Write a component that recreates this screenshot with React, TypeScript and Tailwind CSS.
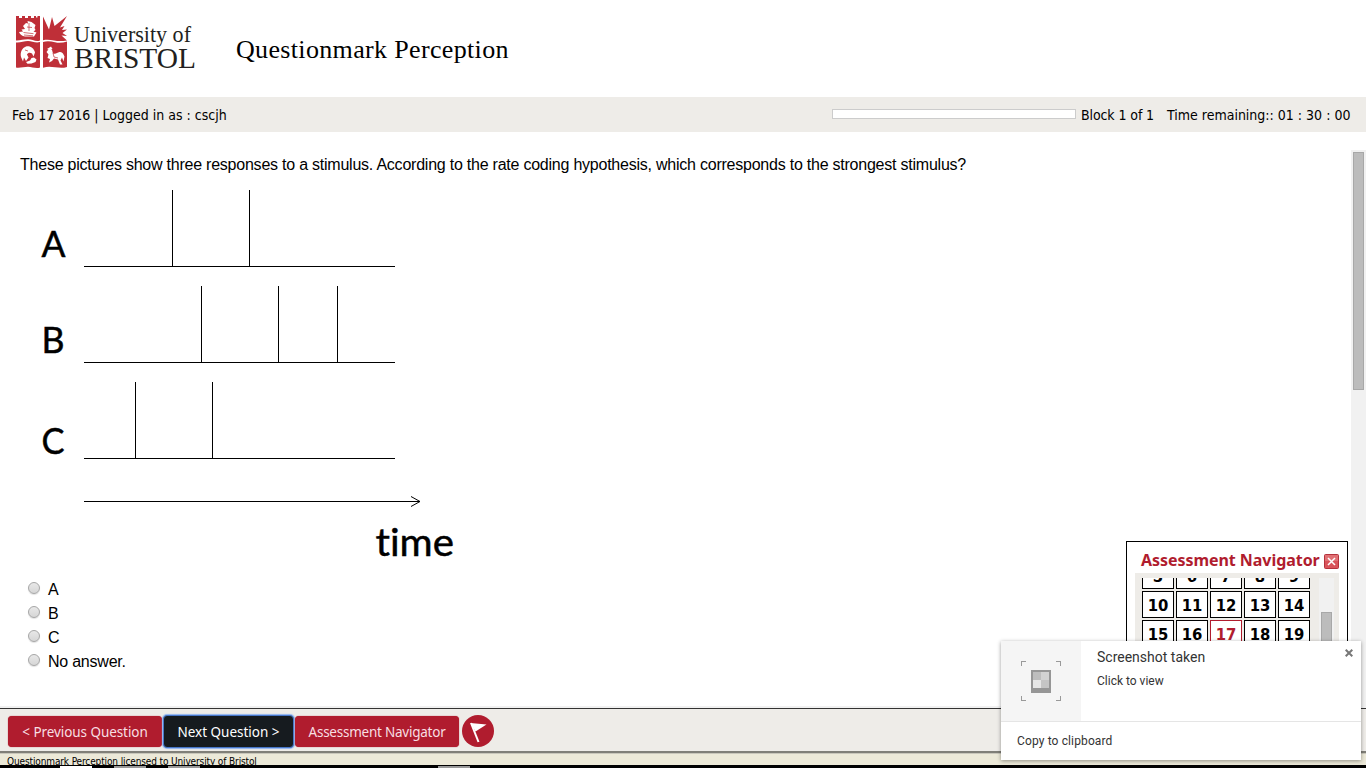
const UI = "font-['DejaVu_Sans_Condensed','DejaVu_Sans',sans-serif] [font-stretch:condensed]";
const NOTO = "font-['Noto_Sans',sans-serif]";

function Logo() {
  return (
    <svg width="184" height="58" viewBox="14 13 184 58" className="block" role="img" aria-label="University of Bristol">
      <g fill="#bf2f38">
        <path d="M16 16h3v2h3v-2h3v2h3v-2h3v2h3v-2h2v1.500h1.500V16H40v24.500c-4 1.600-8-1.200-12-1.200-5 0-8 1.500-12 1.200Z" />
        <path d="M43 16.500L49 29.500 52 17 54.500 26 67 16 60 27.500 64.500 26 62 30 67 29.500 62.500 33 67 36 61.500 35.500 67 40.500c-5 .8-9 .8-13 0-4-.8-8-1-11-.200Z" />
        <path d="M16 42.500c4 .5 8-1.500 12-1.500s8 2.500 12 1V67.500c-4 1.500-8-.8-12-.8s-8 1.500-12 .8Z" />
        <path d="M43 42c4-1.500 8-.8 12 .3 4 1 8 .5 12-.8V67c-4 1.300-8 .8-12 .3s-8-.8-12 .4Z" />
      </g>
      <g fill="#fff">
        <path d="M19 32l4-.5-1.500-2L25 29l-2-3 3-3 2 .5-.5-2.500 4 1 4 3-1 3 1 2-2 1.500 3 1-2.500 4H25c-3-.5-5-2-6-4.500Z" />
        <path d="M21 57c-1-5 1-9 5-10.500 4-1 8 1.500 9 6l-1.500 4-1.500-3c-2-1.500-4-1-5 1l1.500 3-2.500 3.500-2-3.500-1 4Z" />
        <path d="M26 62l4-1.500 1.500-2.500 2.500-.5 2.500 2-1 2.500-4 1.500-4 .2Z" />
        <path d="M46.500 52l3-4 2.500 2 1 3.500c3 1 4-1 6.500-1.500 3-.5 4 2 5 4.500l-1 5-1.500-4-1.500 3 2 4h-2.500l-2-5-4-1-2 2.500-3 1.500 1-3.500-2.500-1 1-3.500Z" />
        <path d="M47 49l4-2.500 1.500 2.500-3 1Z" />
      </g>
      <path d="M23.500 32.500l10 1.200M27 27l5 .500M29 23v8M24 35l9 .8M25 50l3 1M53 53l1 4 4 1" stroke="#bf2f38" strokeWidth=".7" fill="none" />
      <g fill="#231f20" className="font-['Liberation_Serif',serif]">
        <text x="74" y="41.500" fontSize="22.500" textLength="117" lengthAdjust="spacingAndGlyphs">University of</text>
        <text x="74" y="67.500" fontSize="29.500" textLength="122" lengthAdjust="spacingAndGlyphs">BRISTOL</text>
      </g>
    </svg>
  );
}

function Chart() {
  return (
    <svg width="460" height="390" viewBox="20 180 460 390" className="block">
      <g stroke="#000" strokeWidth="1" fill="none">
        <g shapeRendering="crispEdges">
          <path d="M84 266.500H395M172.500 190V266M249.500 190V266" />
          <path d="M84 362.500H395M201.500 286V362M278.500 286V362M337.500 286V362" />
          <path d="M84 458.500H395M135.500 382V458M212.500 382V458" />
          <path d="M84 501.500H420" />
        </g>
        <path d="M411 496.500L420 501.500L411 506.500" />
      </g>
      <g fill="#000" stroke="#000" strokeWidth=".5" fontSize="37.500" className="font-['Lato',sans-serif] tracking-normal [font-variant-ligatures:none]">
        <text x="41.500" y="257" textLength="24" lengthAdjust="spacingAndGlyphs">A</text>
        <text x="41.500" y="353" textLength="23" lengthAdjust="spacingAndGlyphs">B</text>
        <text x="41.500" y="454" textLength="23" lengthAdjust="spacingAndGlyphs">C</text>
        <text x="375.500" y="555.500" fontSize="38.500" textLength="78.500" lengthAdjust="spacingAndGlyphs">time</text>
      </g>
    </svg>
  );
}

function Navigator() {
  const cells = Array.from({ length: 15 }, (_, i) => i + 5);
  return (
    <div className="absolute left-[1126px] top-[541px] h-[130px] w-[222px] border border-black bg-white px-2 pt-2">
      <div className="flex h-[23px] items-start pl-1.5">
        <span className={`w-[183px] whitespace-nowrap text-[16px] leading-[21px] font-bold tracking-[-0.05px] text-[#b01c2e] ${NOTO}`}>Assessment Navigator</span>
        <svg width="15" height="15" viewBox="0 0 15 15" className="mt-1 block shrink-0">
          <rect x=".5" y=".5" width="14" height="14" rx="1" fill="#d9535a" stroke="#b5323c" />
          <path d="M1 1h13v6H1z" fill="#e58386" opacity=".6" />
          <path d="M4 4l7 7M11 4l-7 7" stroke="#fff" strokeWidth="1.500" />
        </svg>
      </div>
      <div className="flex h-[96px] w-[204px] bg-[#eeece8] pt-[5px] pl-[7px]">
        <div className="h-[90px] w-[177px] overflow-hidden">
          <div className="-mt-4 grid w-[168px] grid-cols-5 gap-0.5">
            {cells.map((n) => (
              <div key={n} className={`flex h-[27px] items-center justify-center border bg-white pt-0.5 text-[16.5px] leading-[23px] font-bold ${UI} ${n === 17 ? "border-[#b01c2e] text-[#b01c2e]" : "border-black text-black"}`}>
                {n}
              </div>
            ))}
          </div>
        </div>
        <div className="h-[90px] w-[15px] bg-[#f1f1f1] px-0.5 pt-[34px]">
          <div className="h-14 w-[11px] border border-[#a8a8a8] bg-[#bcbcbc]" />
        </div>
      </div>
    </div>
  );
}

function Notification() {
  return (
    <div className="absolute left-[1001px] top-[641px] flex h-[119px] w-[360px] flex-col bg-white font-['Roboto',sans-serif] text-[#333] shadow-[0_1px_4px_rgba(0,0,0,0.4)]">
      <div className="flex h-[80px]">
        <div className="flex w-[80px] items-center justify-center bg-[#f5f5f5]">
          <svg width="40" height="40" viewBox="0 0 40 40" shapeRendering="crispEdges">
            <path d="M.5 5V.5H5M35 .5h4.500V5M.5 35v4.500H5M35 39.500h4.500V35" stroke="#999" fill="none" />
            <rect x="10" y="9" width="20" height="23" rx="1" fill="#969696" />
            <path d="M12 11h8v8h-8z" fill="#bdbdbd" />
            <path d="M20 11h8v8h-8z" fill="#d2d2d2" />
            <path d="M12 19h8v8h-8z" fill="#e6e6e6" />
            <path d="M20 19h8v8h-8z" fill="#c5c5c5" />
          </svg>
        </div>
        <div className="flex-1 pt-1.5 pl-4">
          <div className="text-[14px] leading-5">Screenshot taken</div>
          <div className="mt-1 text-[12px] leading-5">Click to view</div>
        </div>
        <svg width="8" height="8" viewBox="0 0 8 8" className="mt-2 mr-2">
          <path d="M.7 .7l6.600 6.600M7.300 .7L.7 7.300" stroke="#777" strokeWidth="2" />
        </svg>
      </div>
      <div className="flex flex-1 items-center border-t border-[#e5e5e5] pl-4 text-[12px] tracking-[0.13px]">Copy to clipboard</div>
    </div>
  );
}

export default function App() {
  return (
    <div className="relative flex h-[768px] w-[1366px] flex-col overflow-hidden bg-white text-black">
      <header className="flex h-[97px] shrink-0 pt-[13px] pl-[14px]">
        <Logo />
        <h1 className="mt-[22px] ml-[38px] font-['Liberation_Serif',serif] text-[26px] leading-[30px] tracking-[0.34px] whitespace-nowrap">Questionmark Perception</h1>
      </header>

      <div className={`flex h-[35px] shrink-0 items-center justify-between bg-[#eeece8] pr-[15px] pl-3 text-[14px] whitespace-nowrap ${UI}`}>
        <span className="w-[216px] pt-0.5">Feb 17 2016 | Logged in as : cscjh</span>
        <div className="flex w-[519px] items-center">
          <div className="mr-[5px] mb-0.5 h-[10px] w-[244px] border border-[#ccc] bg-white" />
          <span className="w-[86px] pt-0.5 tracking-[-0.1px]">Block 1 of 1</span>
          <span className="pt-0.5">Time remaining:: 01 : 30 : 00</span>
        </div>
      </div>

      <main className="flex h-[574px] shrink-0 justify-between pt-[18px]">
        <div className="pl-5 font-['Liberation_Sans',sans-serif] text-[16px] tracking-[-0.231px]">
          <p className="h-[30px] leading-[29px] whitespace-nowrap">These pictures show three responses to a stimulus. According to the rate coding hypothesis, which corresponds to the strongest stimulus?</p>
          <Chart />
          <div className="mt-[7px] pl-2">
            {["A", "B", "C", "No answer."].map((label) => (
              <label key={label} className="flex h-6 items-start">
                <span className="mt-[5px] size-3 rounded-full border border-[#a6a6a6] bg-linear-to-b from-[#e8e8e8] to-[#d6d6d6] shadow-[0_1px_1px_rgba(0,0,0,0.12)]" />
                <span className="ml-2 leading-[26px]">{label}</span>
              </label>
            ))}
          </div>
        </div>
        <div className="w-[15px] bg-[#f1f1f1] px-0.5 pt-0.5">
          <div className="h-[238px] w-[11px] border border-[#a8a8a8] bg-[#bcbcbc]" />
        </div>
      </main>

      <footer className="flex h-[62px] shrink-0 flex-col">
        <div className="h-[2px] bg-[#f1f1f1]" />
        <div className={`flex h-[43px] items-center border-t border-[#333] bg-[#eeece8] pl-2 text-[13.5px] whitespace-nowrap text-[#f8dfe2] ${NOTO}`}>
          <button className="mt-0.5 h-[31px] w-[154px] rounded-sm bg-[#b01c2e] pt-0.5 text-center tracking-[-0.07px] shadow-[0_0_1px_#b01c2e]">&lt; Previous Question</button>
          <button className="mt-0.5 ml-px h-[33px] w-[131px] rounded-sm border border-[#4676c8] bg-[#161b1f] pt-0.5 text-center text-white shadow-[0_0_1px_1px_#8fb4f0]">Next Question &gt;</button>
          <button className="mt-0.5 ml-px h-[31px] w-[164px] rounded-sm bg-[#b01c2e] pt-0.5 text-center tracking-[-0.24px] shadow-[0_0_1px_#b01c2e]">Assessment Navigator</button>
          <svg width="32" height="32" viewBox="0 0 32 32" className="mt-0.5 ml-[3px] block">
            <circle cx="16" cy="16" r="16" fill="#b01c2e" />
            <path d="M8.500 8l16 1.500-11 7Z" fill="#fff" />
            <path d="M9 8l7.500 19" stroke="#fff" strokeWidth="2" />
          </svg>
        </div>
        <div className="h-[3px] border-t-2 border-[#807f78] bg-[#c9c7bb]" />
        <div className={`h-[11px] overflow-hidden bg-[#ece9d8] pl-[7px] text-[10px] leading-[15px] tracking-[-0.125px] whitespace-nowrap ${UI}`}>Questionmark Perception licensed to University of Bristol</div>
        <div className="flex h-[3px] bg-black pt-px pl-[60px]">
          <div className="w-8 bg-white" />
          <div className="ml-[22px] w-8 bg-[#999]" />
          <div className="ml-[22px] w-8 bg-[#999]" />
          <div className="ml-[238px] w-8 bg-[#999]" />
        </div>
      </footer>

      <Navigator />
      <Notification />
    </div>
  );
}
